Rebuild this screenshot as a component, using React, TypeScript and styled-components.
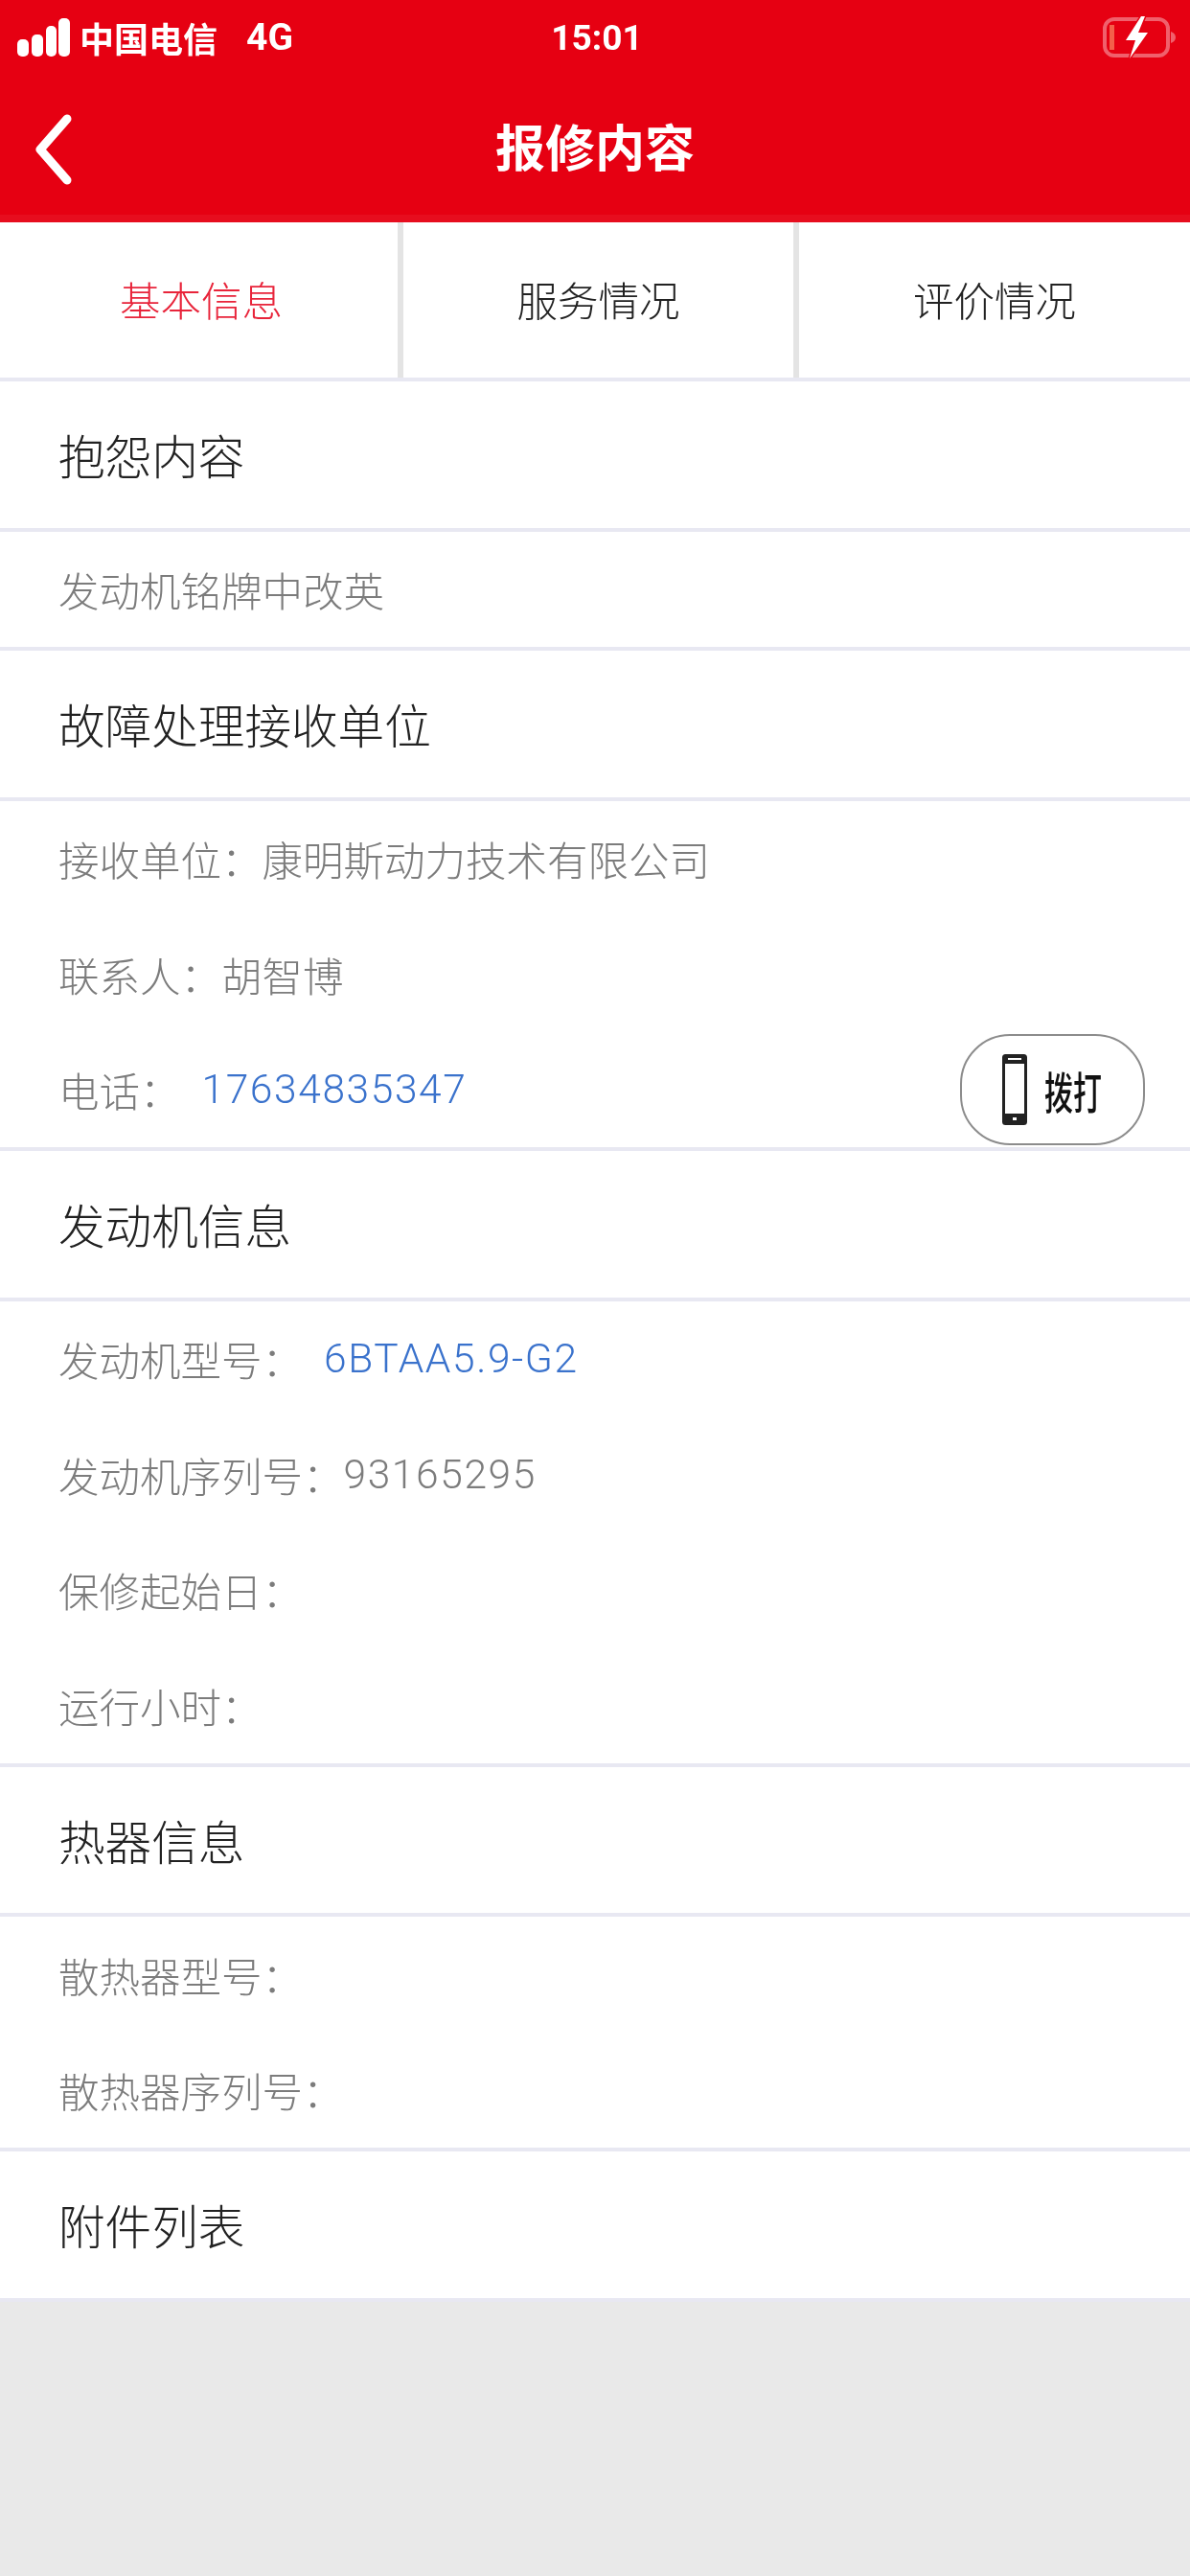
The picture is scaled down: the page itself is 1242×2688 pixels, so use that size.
import React from 'react';
import styled, { createGlobalStyle } from 'styled-components';

const GlobalStyle = createGlobalStyle`
  html, body {
    margin: 0;
    padding: 0;
    background: #e9e9e9;
  }
  * {
    box-sizing: border-box;
  }
`;

const FONT = `Roboto, "Noto Sans CJK SC", sans-serif`;

const Page = styled.div`
  width: 1242px;
  height: 2688px;
  overflow: hidden;
  display: flex;
  flex-direction: column;
  background: #e9e9e9;
  font-family: ${FONT};
  filter: blur(0.7px);
`;

const TopBar = styled.header`
  height: 232px;
  display: flex;
  flex-direction: column;
  background: #e60012;
  border-bottom: 8px solid #e70d1e;
  color: #fff;
`;

const StatusBar = styled.div`
  height: 78px;
  padding: 0 14px 0 18px;
  display: grid;
  grid-template-columns: 1fr auto 1fr;
  align-items: center;
`;

const StatusLeft = styled.div`
  display: flex;
  align-items: center;
  font-size: 36px;
  font-weight: 700;
`;

const Carrier = styled.span`
  margin-left: 10px;
`;

const Network = styled.span`
  margin-left: 30px;
  font-size: 39px;
  font-weight: 700;
`;

const Time = styled.div`
  font-size: 37px;
  font-weight: 700;
`;

const StatusRight = styled.div`
  display: flex;
  justify-content: flex-end;
`;

const NavBar = styled.div`
  flex: 1;
  position: relative;
  display: flex;
  align-items: center;
  justify-content: center;
`;

const BackIcon = styled.svg`
  position: absolute;
  left: 34px;
  top: 38px;
`;

const Title = styled.h1`
  margin: 0;
  font-size: 52px;
  font-weight: 700;
`;

const Tabs = styled.nav`
  height: 166px;
  display: grid;
  grid-template-columns: 421px 413px 1fr;
  background: #fff;
  border-bottom: 4px solid #e8e8f2;
`;

const Tab = styled.div<{ $active?: boolean; $divider?: boolean }>`
  display: flex;
  align-items: center;
  justify-content: center;
  padding-left: ${(p) => (p.$active ? 5 : 0)}px;
  padding-bottom: 4px;
  font-size: 42.5px;
  font-weight: 300;
  color: ${(p) => (p.$active ? '#e8243a' : '#222')};
  border-right: ${(p) => (p.$divider ? '6px solid #e4e4e4' : '0')};
`;

const SectionHead = styled.div`
  height: 156.5px;
  display: flex;
  align-items: center;
  padding-left: 61px;
  background: #fff;
  border-bottom: 4px solid #e8e8f2;
  font-size: 48.6px;
  font-weight: 300;
  color: #222;
`;

const Body = styled.div`
  background: #fff;
  border-bottom: 4px solid #e8e8f2;
`;

const Row = styled.div`
  height: 120.5px;
  display: flex;
  align-items: center;
  padding: 0 47px 0 61px;
  font-size: 42.5px;
  font-weight: 300;
  color: #7c7c7c;
`;

const Label = styled.span<{ $gap?: number }>`
  margin-right: ${(p) => p.$gap ?? 0}px;
`;

const Digits = styled.span`
  letter-spacing: 1.6px;
`;

const LinkText = styled(Digits)`
  color: #3a72cc;
`;

const CallButton = styled.button`
  margin-left: auto;
  width: 193px;
  height: 116px;
  display: flex;
  align-items: center;
  justify-content: flex-start;
  gap: 18px;
  padding: 0 0 0 42px;
  background: #fff;
  border: 2.5px solid #8c8c8c;
  border-radius: 52px;
  font-family: ${FONT};
  color: #111;
`;

const CallText = styled.span`
  display: inline-block;
  width: 60px;
  font-size: 46px;
  font-weight: 500;
  white-space: nowrap;
  transform: scaleX(0.65);
  transform-origin: left center;
`;

const Footer = styled.div`
  flex: 1;
`;

const SignalIcon = () => (
  <svg width="55" height="42" viewBox="0 0 55 42" fill="#fff">
    <rect x="0" y="23" width="12" height="18" rx="5" />
    <rect x="15" y="18" width="12" height="23" rx="5" />
    <rect x="30" y="9" width="11" height="32" rx="5" />
    <rect x="43" y="1" width="12" height="40" rx="5" />
  </svg>
);

const BatteryIcon = () => (
  <svg width="78" height="46" viewBox="0 0 78 46">
    <rect x="3" y="4" width="66" height="38" rx="10" fill="none" stroke="#f0606c" strokeWidth="4" />
    <rect x="8" y="10" width="5" height="26" fill="#f4604a" />
    <path d="M72 17c3 1 5 3 5 6s-2 5-5 6z" fill="#f0606c" />
    <path
      d="M41 1 L25 26 H35 L29 45 L48 18 H38 L45 1 Z"
      fill="#fff"
      stroke="#e60012"
      strokeWidth="3"
      paintOrder="stroke"
    />
  </svg>
);

const PhoneIcon = () => (
  <svg width="26" height="74" viewBox="0 0 26 74">
    <rect x="1.5" y="1.5" width="23" height="71" rx="2" fill="none" stroke="#222" strokeWidth="3" />
    <rect x="1" y="1" width="24" height="9" fill="#222" />
    <rect x="1" y="62" width="24" height="11" fill="#222" />
    <rect x="6" y="4" width="14" height="2" fill="#fff" />
    <rect x="11" y="66" width="4" height="3" fill="#fff" />
  </svg>
);

export default function App() {
  return (
    <Page>
      <GlobalStyle />
      <TopBar>
        <StatusBar>
          <StatusLeft>
            <SignalIcon />
            <Carrier>中国电信</Carrier>
            <Network>4G</Network>
          </StatusLeft>
          <Time>15:01</Time>
          <StatusRight>
            <BatteryIcon />
          </StatusRight>
        </StatusBar>
        <NavBar>
          <BackIcon width="44" height="80" viewBox="0 0 44 80">
            <path d="M36 8 L8 40 L36 72" fill="none" stroke="#fff" strokeWidth="9" strokeLinecap="round" strokeLinejoin="round" />
          </BackIcon>
          <Title>报修内容</Title>
        </NavBar>
      </TopBar>
      <Tabs>
        <Tab $active $divider>基本信息</Tab>
        <Tab $divider>服务情况</Tab>
        <Tab>评价情况</Tab>
      </Tabs>
      <SectionHead>抱怨内容</SectionHead>
      <Body>
        <Row>发动机铭牌中改英</Row>
      </Body>
      <SectionHead>故障处理接收单位</SectionHead>
      <Body>
        <Row>接收单位：康明斯动力技术有限公司</Row>
        <Row>联系人：胡智博</Row>
        <Row>
          <Label $gap={22}>电话：</Label>
          <LinkText>17634835347</LinkText>
          <CallButton>
            <PhoneIcon />
            <CallText>拨打</CallText>
          </CallButton>
        </Row>
      </Body>
      <SectionHead>发动机信息</SectionHead>
      <Body>
        <Row>
          <Label $gap={22}>发动机型号：</Label>
          <LinkText>6BTAA5.9-G2</LinkText>
        </Row>
        <Row>
          发动机序列号：<Digits>93165295</Digits>
        </Row>
        <Row>保修起始日：</Row>
        <Row>运行小时：</Row>
      </Body>
      <SectionHead>热器信息</SectionHead>
      <Body>
        <Row>散热器型号：</Row>
        <Row>散热器序列号：</Row>
      </Body>
      <SectionHead>附件列表</SectionHead>
      <Footer />
    </Page>
  );
}
